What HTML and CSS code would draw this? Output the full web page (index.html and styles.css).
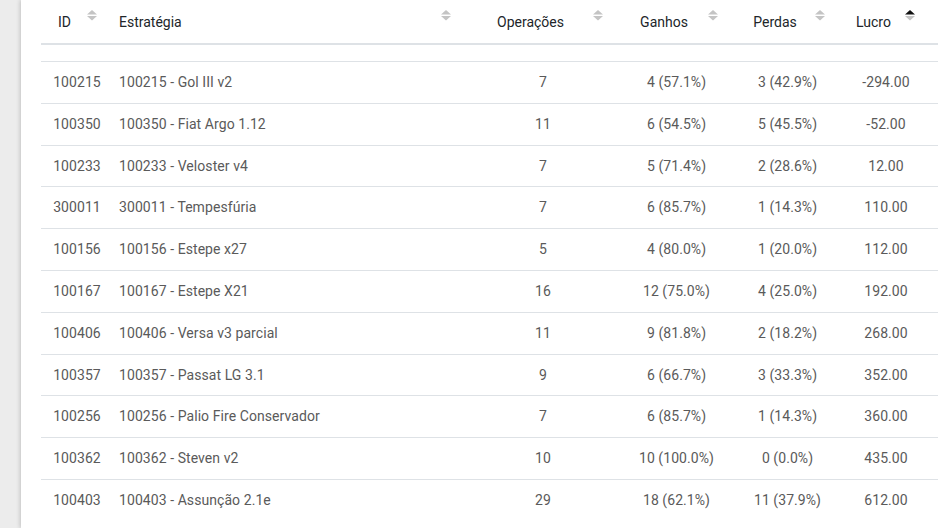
FILE: index.html
```html
<!DOCTYPE html>
<html lang="pt">
<head>
<meta charset="utf-8">
<title>Estratégias</title>
<link rel="stylesheet" href="styles.css">
</head>
<body>
<main class="card">
  <table class="grid">
    <colgroup>
      <col class="c-id"><col class="c-name"><col class="c-ops"><col class="c-win"><col class="c-loss"><col class="c-profit"><col class="c-extra">
    </colgroup>
    <thead>
      <tr>
        <th class="sortable">ID<svg class="sort" viewBox="0 0 10 11"><path class="up" d="M0 4.6L5 0 10 4.6Z"/><path class="down" d="M0 6H10L5 10.6Z"/></svg></th>
        <th class="sortable left">Estratégia<svg class="sort" viewBox="0 0 10 11"><path class="up" d="M0 4.6L5 0 10 4.6Z"/><path class="down" d="M0 6H10L5 10.6Z"/></svg></th>
        <th class="sortable">Operações<svg class="sort" viewBox="0 0 10 11"><path class="up" d="M0 4.6L5 0 10 4.6Z"/><path class="down" d="M0 6H10L5 10.6Z"/></svg></th>
        <th class="sortable">Ganhos<svg class="sort" viewBox="0 0 10 11"><path class="up" d="M0 4.6L5 0 10 4.6Z"/><path class="down" d="M0 6H10L5 10.6Z"/></svg></th>
        <th class="sortable">Perdas<svg class="sort" viewBox="0 0 10 11"><path class="up" d="M0 4.6L5 0 10 4.6Z"/><path class="down" d="M0 6H10L5 10.6Z"/></svg></th>
        <th class="sortable">Lucro<svg class="sort asc" viewBox="0 0 10 11"><path class="up" d="M0 4.6L5 0 10 4.6Z"/><path class="down" d="M0 6H10L5 10.6Z"/></svg></th>
        <th></th>
      </tr>
    </thead>
    <tbody>
      <tr class="spacer"><td colspan="7"></td></tr>
      <tr><td>100215</td><td class="left">100215 - Gol III v2</td><td>7</td><td>4 (57.1%)</td><td>3 (42.9%)</td><td>-294.00</td><td></td></tr>
      <tr><td>100350</td><td class="left">100350 - Fiat Argo 1.12</td><td>11</td><td>6 (54.5%)</td><td>5 (45.5%)</td><td>-52.00</td><td></td></tr>
      <tr><td>100233</td><td class="left">100233 - Veloster v4</td><td>7</td><td>5 (71.4%)</td><td>2 (28.6%)</td><td>12.00</td><td></td></tr>
      <tr><td>300011</td><td class="left">300011 - Tempesfúria</td><td>7</td><td>6 (85.7%)</td><td>1 (14.3%)</td><td>110.00</td><td></td></tr>
      <tr><td>100156</td><td class="left">100156 - Estepe x27</td><td>5</td><td>4 (80.0%)</td><td>1 (20.0%)</td><td>112.00</td><td></td></tr>
      <tr><td>100167</td><td class="left">100167 - Estepe X21</td><td>16</td><td>12 (75.0%)</td><td>4 (25.0%)</td><td>192.00</td><td></td></tr>
      <tr><td>100406</td><td class="left">100406 - Versa v3 parcial</td><td>11</td><td>9 (81.8%)</td><td>2 (18.2%)</td><td>268.00</td><td></td></tr>
      <tr><td>100357</td><td class="left">100357 - Passat LG 3.1</td><td>9</td><td>6 (66.7%)</td><td>3 (33.3%)</td><td>352.00</td><td></td></tr>
      <tr><td>100256</td><td class="left">100256 - Palio Fire Conservador</td><td>7</td><td>6 (85.7%)</td><td>1 (14.3%)</td><td>360.00</td><td></td></tr>
      <tr><td>100362</td><td class="left">100362 - Steven v2</td><td>10</td><td>10 (100.0%)</td><td>0 (0.0%)</td><td>435.00</td><td></td></tr>
      <tr><td>100403</td><td class="left">100403 - Assunção 2.1e</td><td>29</td><td>18 (62.1%)</td><td>11 (37.9%)</td><td>612.00</td><td></td></tr>
    </tbody>
  </table>
</main>
</body>
</html>
```

FILE: styles.css
```css
html, body {
  margin: 0;
  height: 100%;
}
body {
  background: #ececec;
  padding-left: 21px;
  overflow: hidden;
  font-family: Roboto, "Noto Sans", sans-serif;
  font-size: 14px;
}
.card {
  background: #fff;
  box-shadow: -1px 0 4px rgba(0, 0, 0, 0.18);
  min-height: 100%;
  padding-left: 20px;
  width: 960px;
}
.grid {
  border-collapse: collapse;
  table-layout: fixed;
  width: 919px;
}
.c-id { width: 72px; }
.c-name { width: 354px; }
.c-ops { width: 152px; }
.c-win { width: 115px; }
.c-loss { width: 107px; }
.c-profit { width: 90px; }
.c-extra { width: 29px; }

.grid th {
  position: relative;
  font-weight: 400;
  color: #212529;
  text-align: center;
  line-height: 17px;
  padding: 14px 37px 12px 12px;
  border-bottom: 2px solid #dee2e6;
  white-space: nowrap;
}
.grid th.left {
  text-align: left;
  padding-left: 6px;
}
.grid td {
  color: #5a5a5a;
  font-weight: 400;
  letter-spacing: 0.07px;
  text-align: center;
  line-height: 16.8px;
  padding: 12px 12px;
  border-top: 1px solid #dee2e6;
  white-space: nowrap;
}
.grid td.left {
  text-align: left;
  padding-left: 6px;
}
.grid tr.spacer td {
  border-top: none;
  padding: 0;
  height: 16px;
}
.sort {
  position: absolute;
  right: 16px;
  top: 10px;
  width: 10px;
  height: 11px;
}
.sort path { fill: #c4c4c4; }
.sort.asc .up { fill: #111; }
```
